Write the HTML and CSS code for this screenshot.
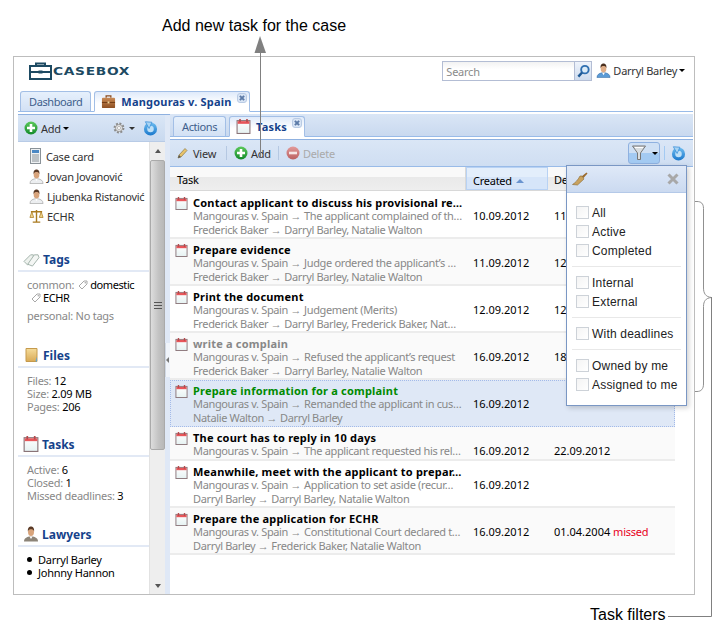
FILE: index.html
```html
<!DOCTYPE html>
<html lang="en">
<head>
<meta charset="utf-8">
<title>Casebox tasks</title>
<link rel="stylesheet" href="styles.css">
</head>
<body>
<svg class="defs" aria-hidden="true">
  <defs>
    <linearGradient id="gBlue" x1="0" y1="0" x2="0" y2="1"><stop offset="0" stop-color="#6fbdf0"/><stop offset="1" stop-color="#1a78cc"/></linearGradient>
    <linearGradient id="gGreen" x1="0" y1="0" x2="0" y2="1"><stop offset="0" stop-color="#5cc95c"/><stop offset="1" stop-color="#138a2a"/></linearGradient>
    <linearGradient id="gRed" x1="0" y1="0" x2="0" y2="1"><stop offset="0" stop-color="#e29a9a"/><stop offset="1" stop-color="#bb6060"/></linearGradient>
    <linearGradient id="gBrown" x1="0" y1="0" x2="0" y2="1"><stop offset="0" stop-color="#c98a55"/><stop offset="1" stop-color="#8d4f22"/></linearGradient>
    <linearGradient id="gFold" x1="0" y1="0" x2="0" y2="1"><stop offset="0" stop-color="#f5dc9a"/><stop offset="1" stop-color="#d9aa55"/></linearGradient>
    <linearGradient id="gCal" x1="0" y1="0" x2="0" y2="1"><stop offset="0" stop-color="#ffffff"/><stop offset="1" stop-color="#e6f2f2"/></linearGradient>
    <symbol id="cal" viewBox="0 0 14 14">
      <rect x="1" y="1.500" width="12" height="12" fill="url(#gCal)" stroke="#8a7478"/>
      <rect x="1.500" y="2" width="11" height="2.500" fill="#e8565a"/>
      <rect x="3" y="0" width="1.500" height="3" fill="#b5494c"/><rect x="9.500" y="0" width="1.500" height="3" fill="#b5494c"/>
    </symbol>
    <symbol id="plus" viewBox="0 0 14 14">
      <circle cx="7" cy="7" r="6.500" fill="url(#gGreen)"/>
      <path d="M5.700 3h2.600v2.700H11v2.600H8.300V11H5.700V8.300H3V5.700h2.700z" fill="#fff"/>
    </symbol>
    <symbol id="minus" viewBox="0 0 14 14">
      <circle cx="7" cy="7" r="6.500" fill="url(#gRed)"/><rect x="3" y="5.700" width="8" height="2.600" fill="#f6e6e6"/>
    </symbol>
    <symbol id="refresh" viewBox="0 0 16 16">
      <circle cx="8" cy="8.500" r="7" fill="url(#gBlue)"/>
      <circle cx="8" cy="8.500" r="3.500" fill="#bfe0f7"/>
      <path d="M2.500 .8 L9.500 1.300 L6.500 8z" fill="#a8d4f4" stroke="#3a8fd8" stroke-width=".8"/>
    </symbol>
    <symbol id="person" viewBox="0 0 16 16">
      <path d="M1 15.500c0-3.500 3-4.500 5-5h4c2 .5 5 1.500 5 5z" fill="#eceef0" stroke="#a0a0a0" stroke-width=".7"/>
      <path d="M6.500 10.500 8 13l1.500-2.500z" fill="#fff"/>
      <ellipse cx="8" cy="6" rx="3" ry="4" fill="#d8a47c"/>
      <path d="M4.900 5.500C4.500 1.500 6.500 .5 8 .5s3.500 1 3.100 5C10.500 3.700 9.500 3.300 8 3.300s-2.500.4-3.100 2.200z" fill="#5a3a26"/>
    </symbol>
    <symbol id="personblue" viewBox="0 0 16 16">
      <path d="M1 15.500c0-3.500 3-4.500 5-5h4c2 .5 5 1.500 5 5z" fill="#5b9bd6" stroke="#3a6fa5" stroke-width=".6"/>
      <path d="M6.500 10.500 8 13l1.500-2.500z" fill="#fff"/>
      <ellipse cx="8" cy="6" rx="3" ry="4" fill="#e0ae88"/>
      <path d="M4.900 5.500C4.500 1.500 6.500 .5 8 .5s3.500 1 3.100 5C10.500 3.700 9.500 3.300 8 3.300s-2.500.4-3.100 2.200z" fill="#4a2f1e"/>
    </symbol>
    <symbol id="tag" viewBox="0 0 10 10">
      <path d="M1 6 6 1h3v3L4 9z" fill="#fff" stroke="#a8a8a8"/><circle cx="7.300" cy="2.700" r=".8" fill="#a8a8a8"/>
    </symbol>
  </defs>
</svg>

<div class="page">
  <div class="caption-top">Add new task for the case</div>

  <div class="frame">
    <header class="top">
      <div class="logo">
        <svg class="logo-mark" viewBox="0 0 23 18" width="23" height="18"><path d="M7 4V1.500h9V4M1 4h21v13H1zM1 10h21" fill="none" stroke="#1d4a62" stroke-width="2"/><rect x="9.500" y="8.500" width="4" height="3" fill="#1d4a62"/></svg>
        <span class="logo-text">CASEBOX</span>
      </div>
      <div class="top-right">
        <div class="search">
          <span class="search-input">Search</span>
          <span class="search-btn"><svg viewBox="0 0 16 16" width="15" height="15"><circle cx="9.500" cy="6" r="4" fill="#dcecf8" stroke="#2f6fb0" stroke-width="2"/><path d="M6.500 9 2.500 13.500" stroke="#1f5a96" stroke-width="2.600"/></svg></span>
        </div>
        <svg class="user-icon" width="15" height="15"><use href="#personblue"/></svg>
        <span class="user-name">Darryl Barley</span><span class="caret"></span>
      </div>
    </header>

    <nav class="tabs main-tabs">
      <div class="tab">Dashboard</div>
      <div class="tab active">
        <svg viewBox="0 0 16 16" width="15" height="15"><path d="M5.500 4V2h5v2" fill="none" stroke="#8d4f22" stroke-width="1.400"/><rect x="1" y="4" width="14" height="11" rx="1" fill="url(#gBrown)"/><rect x="1" y="8.500" width="14" height="1" fill="#6e3a14"/><rect x="7" y="8" width="2" height="2" fill="#f0d9a0"/></svg>
        <span>Mangouras v. Spain</span><span class="tab-close"></span>
      </div>
    </nav>
    <div class="tabs-gap"></div>

    <div class="workspace">
      <aside class="side">
        <div class="side-bar">
          <svg width="14" height="14"><use href="#plus"/></svg>
          <span class="btn-label">Add</span><span class="caret"></span>
          <span class="spacer"></span>
          <svg viewBox="0 0 16 16" width="14" height="14"><circle cx="8" cy="8" r="5" fill="#e8e8e8" stroke="#8a8a8a" stroke-width="2.400" stroke-dasharray="2.200 1.700"/><circle cx="8" cy="8" r="4" fill="none" stroke="#999"/><circle cx="8" cy="8" r="1.800" fill="#fff" stroke="#999" stroke-width=".7"/></svg>
          <span class="caret gear-caret"></span>
          <svg class="side-refresh" width="15" height="15"><use href="#refresh"/></svg>
        </div>
        <div class="side-body">
          <div class="side-content">
            <ul class="people">
              <li><svg viewBox="0 0 14 16" width="14" height="16"><rect x="1.500" y=".5" width="10" height="15" fill="#eef1f3" stroke="#8a9298"/><rect x="3" y="2" width="7" height="3" fill="#4b88c4"/><path d="M3 7h7M3 9h7M3 11h7M3 13h7" stroke="#8a9298"/></svg>Case card</li>
              <li><svg width="15" height="15"><use href="#person"/></svg>Jovan Jovanović</li>
              <li><svg width="15" height="15"><use href="#person"/></svg>Ljubenka Ristanović</li>
              <li><svg viewBox="0 0 16 16" width="15" height="15"><path d="M8 1v13M4 14h8M2 3h12" stroke="#a97a1f" stroke-width="1.500" fill="none"/><path d="M3 3 1 9h4zM13 3l-2 6h4z" fill="#f2d88f" stroke="#a97a1f" stroke-width=".8"/></svg>ECHR</li>
            </ul>

            <section class="sec sec-tags">
              <h3><svg viewBox="0 0 18 16" width="17" height="15"><path d="M1 10 8 3l3 0 0 4-6 7z" fill="#eef2ee" stroke="#9fb0a8"/><path d="M5 13 12 3h4l1 3-7 9z" fill="#f4f6f4" stroke="#9fb0a8"/></svg>Tags</h3>
              <p class="tagline"><span class="muted">common:</span> <svg class="tag-ic" width="10" height="10"><use href="#tag"/></svg><b>domestic</b></p>
              <p class="tagline indent"><svg class="tag-ic" width="10" height="10"><use href="#tag"/></svg><b>ECHR</b></p>
              <p class="muted personal">personal: No tags</p>
            </section>

            <section class="sec sec-files">
              <h3><svg class="files-ic" viewBox="0 0 14 16" width="14" height="16"><path d="M1 1.500h11v13H1z" fill="url(#gFold)" stroke="#c59a4c"/><path d="M12 9.500v5h-1.500z" fill="#5aa6dc"/></svg>Files</h3>
              <p><span class="muted">Files:</span> <b>12</b></p>
              <p><span class="muted">Size:</span> <b>2.09 MB</b></p>
              <p><span class="muted">Pages:</span> <b>206</b></p>
            </section>

            <section class="sec sec-tasks">
              <h3><svg width="16" height="16"><use href="#cal"/></svg>Tasks</h3>
              <p><span class="muted">Active:</span> <b>6</b></p>
              <p><span class="muted">Closed:</span> <b>1</b></p>
              <p><span class="muted">Missed deadlines:</span> <b>3</b></p>
            </section>

            <section class="sec">
              <h3><svg viewBox="0 0 16 16" width="16" height="16"><path d="M1 15.500c0-3.500 3-4.500 5-5h4c2 .5 5 1.500 5 5z" fill="#8c8478"/><path d="M6.500 10.500 8 13l1.500-2.500z" fill="#fff"/><ellipse cx="8" cy="6" rx="3" ry="4" fill="#d8a47c"/><path d="M4.900 5.500C4.500 1.500 6.500 .5 8 .5s3.500 1 3.100 5C10.500 3.700 9.500 3.300 8 3.300s-2.500.4-3.100 2.200z" fill="#5a3a26"/></svg>Lawyers</h3>
              <ul class="bullets"><li>Darryl Barley</li><li>Johnny Hannon</li></ul>
            </section>
          </div>
          <div class="scrollbar">
            <span class="arrow-up"></span>
            <div class="thumb"><span class="grip"></span></div>
            <span class="arrow-down"></span>
          </div>
        </div>
      </aside>

      <div class="splitter"><span class="collapse"></span></div>

      <main class="main">
        <nav class="tabs sub-tabs">
          <div class="tab">Actions</div>
          <div class="tab active">
            <svg width="15" height="15"><use href="#cal"/></svg>
            <span>Tasks</span><span class="tab-close"></span>
          </div>
        </nav>
        <div class="tabs-gap thin"></div>

        <div class="toolbar">
          <span class="tool tool-view"><svg viewBox="0 0 12 12" width="12" height="12"><path d="M1 11l1-3 6-6.500 2 2L4 10z" fill="#e8c36a" stroke="#8a7a4a" stroke-width=".7"/><path d="M1 11l1-3 2 2z" fill="#555"/></svg><span>View</span></span>
          <span class="sep"></span>
          <span class="tool"><svg width="14" height="14"><use href="#plus"/></svg><span>Add</span></span>
          <span class="sep"></span>
          <span class="tool disabled"><svg width="14" height="14"><use href="#minus"/></svg><span>Delete</span></span>
          <span class="spacer"></span>
          <span class="filter-btn">
            <svg viewBox="0 0 14 16" width="14" height="16"><path d="M.5 1h13L8.500 8v6.500h-3V8z" fill="#d8dde0" stroke="#777"/><path d="M3 2.500h8" stroke="#fff"/></svg>
            <span class="caret"></span>
          </span>
          <span class="sep blue"></span>
          <svg class="tool-refresh" width="15" height="15"><use href="#refresh"/></svg>
        </div>

        <div class="grid-head">
          <div class="hd hd-task">Task</div>
          <div class="hd hd-created">Created <span class="sort"></span></div>
          <div class="hd hd-deadline">Deadline</div>
        </div>

        <div class="rows">
          <article class="row">
            <svg class="row-ic" width="13" height="13"><use href="#cal"/></svg>
            <div class="cell-main"><div class="title">Contact applicant to discuss his provisional re…</div><div class="sub">Mangouras v. Spain <span class="arr">→</span> The applicant complained of th…</div><div class="sub">Frederick Baker <span class="arr">→</span> Darryl Barley, Natalie Walton</div></div>
            <div class="date">10.09.2012</div><div class="date">11.09.2012</div>
          </article>
          <article class="row alt">
            <svg class="row-ic" width="13" height="13"><use href="#cal"/></svg>
            <div class="cell-main"><div class="title">Prepare evidence</div><div class="sub">Mangouras v. Spain <span class="arr">→</span> Judge ordered the applicant’s …</div><div class="sub">Frederick Baker <span class="arr">→</span> Darryl Barley, Natalie Walton</div></div>
            <div class="date">11.09.2012</div><div class="date">12.09.2012</div>
          </article>
          <article class="row">
            <svg class="row-ic" width="13" height="13"><use href="#cal"/></svg>
            <div class="cell-main"><div class="title">Print the document</div><div class="sub">Mangouras v. Spain <span class="arr">→</span> Judgement (Merits)</div><div class="sub">Frederick Baker <span class="arr">→</span> Darryl Barley, Frederick Baker, Nat…</div></div>
            <div class="date">12.09.2012</div><div class="date">12.09.2012</div>
          </article>
          <article class="row alt">
            <svg class="row-ic" width="13" height="13"><use href="#cal"/></svg>
            <div class="cell-main"><div class="title done">write a complain</div><div class="sub">Mangouras v. Spain <span class="arr">→</span> Refused the applicant’s request</div><div class="sub">Frederick Baker <span class="arr">→</span> Darryl Barley, Natalie Walton</div></div>
            <div class="date">16.09.2012</div><div class="date">18.09.2012</div>
          </article>
          <article class="row selected">
            <svg class="row-ic" width="13" height="13"><use href="#cal"/></svg>
            <div class="cell-main"><div class="title green">Prepare information for a complaint</div><div class="sub">Mangouras v. Spain <span class="arr">→</span> Remanded the applicant in cus…</div><div class="sub">Natalie Walton <span class="arr">→</span> Darryl Barley</div></div>
            <div class="date">16.09.2012</div><div class="date"></div>
          </article>
          <article class="row alt short">
            <svg class="row-ic" width="13" height="13"><use href="#cal"/></svg>
            <div class="cell-main"><div class="title">The court has to reply in 10 days</div><div class="sub">Mangouras v. Spain <span class="arr">→</span> The applicant requested his rel…</div></div>
            <div class="date">16.09.2012</div><div class="date">22.09.2012</div>
          </article>
          <article class="row">
            <svg class="row-ic" width="13" height="13"><use href="#cal"/></svg>
            <div class="cell-main"><div class="title">Meanwhile, meet with the applicant to prepar…</div><div class="sub">Mangouras v. Spain <span class="arr">→</span> Application to set aside (recur…</div><div class="sub">Darryl Barley <span class="arr">→</span> Darryl Barley, Natalie Walton</div></div>
            <div class="date">16.09.2012</div><div class="date"></div>
          </article>
          <article class="row alt">
            <svg class="row-ic" width="13" height="13"><use href="#cal"/></svg>
            <div class="cell-main"><div class="title">Prepare the application for ECHR</div><div class="sub">Mangouras v. Spain <span class="arr">→</span> Constitutional Court declared t…</div><div class="sub">Darryl Barley <span class="arr">→</span> Frederick Baker, Natalie Walton</div></div>
            <div class="date">16.09.2012</div><div class="date">01.04.2004 <span class="missed">missed</span></div>
          </article>
        </div>
      </main>
    </div>

    <div class="popup">
      <div class="popup-head">
        <svg viewBox="0 0 16 14" width="16" height="14"><path d="M9.500 4.500 14.500.5l1 1-4 4.500z" fill="#9a6a2e"/><path d="M10 4 12 7 5.500 13 .5 12.500C3 11 6 8 8 4z" fill="#c9a25e" stroke="#8a6a30" stroke-width=".6"/></svg>
        <svg viewBox="0 0 12 12" width="12" height="12"><path d="M1.500 1.500l9 9M10.500 1.500l-9 9" stroke="#a8a8a8" stroke-width="3"/></svg>
      </div>
      <div class="popup-body">
        <div class="group">
          <label class="opt"><span class="box"></span>All</label>
          <label class="opt"><span class="box"></span>Active</label>
          <label class="opt"><span class="box"></span>Completed</label>
        </div>
        <div class="group">
          <label class="opt"><span class="box"></span>Internal</label>
          <label class="opt"><span class="box"></span>External</label>
        </div>
        <div class="group">
          <label class="opt"><span class="box"></span>With deadlines</label>
        </div>
        <div class="group">
          <label class="opt"><span class="box"></span>Owned by me</label>
          <label class="opt"><span class="box"></span>Assigned to me</label>
        </div>
      </div>
    </div>
  </div>

  <svg class="notes" width="728" height="636" aria-hidden="true">
    <path d="M260.500 52V157" stroke="#808080" fill="none"/>
    <path d="M260 36 254.500 53H266z" fill="#808080"/>
    <path d="M695 201.500h2c4 0 6.500 2 6.500 7V288c0 5 2 9 8 9.500-6 .5-8 4-8 9V384c0 5-2.500 7.500-6.500 7.500h-2" fill="none" stroke="#909090"/>
    <path d="M711.500 297V616.500H668" fill="none" stroke="#808080"/>
  </svg>
  <div class="caption-bottom">Task filters</div>
</div>
</body>
</html>
```
FILE: styles.css
```css
* { box-sizing: border-box; }
html, body { margin: 0; padding: 0; background: #fff; }
body { font: 11px/13px "Noto Sans", "Liberation Sans", sans-serif; letter-spacing: -.25px; color: #000; }
ul { list-style: none; margin: 0; padding: 0; }
p, h3 { margin: 0; }
svg { flex: none; display: block; }
.defs { position: absolute; width: 0; height: 0; }
.page { position: relative; width: 728px; height: 636px; overflow: hidden; }

.caption-top { height: 56px; padding: 16px 0 0 162px; font: 16px/19px "Liberation Sans", sans-serif; letter-spacing: 0; }
.caption-bottom { position: absolute; left: 590px; top: 605px; font: 16px/19px "Liberation Sans", sans-serif; letter-spacing: 0; }
.notes { position: absolute; left: 0; top: 0; pointer-events: none; }

.frame { position: relative; width: 682px; height: 539px; margin-left: 13px; border: 1px solid #bdbdbd; padding: 0 1px 0 4px; display: flex; flex-direction: column; }

.top { height: 33px; display: flex; justify-content: space-between; padding: 4px 8px 0 11px; flex: none; }
.logo { display: flex; align-items: center; height: 20px; gap: 1px; }
.logo-text { font: bold 11px/14px "DejaVu Sans", sans-serif; letter-spacing: .55px; color: #1d4a62; padding-top: 2px; transform: scaleX(1.25); transform-origin: left center; }
.top-right { display: flex; align-items: flex-start; }
.search { width: 150px; height: 20px; border: 1px solid #b3bdd4; display: flex; background: linear-gradient(#f2f2f2, #fff 40%); }
.search-input { flex: 1; padding: 3px 0 0 3px; color: #8a8a8a; }
.search-btn { width: 17px; background: linear-gradient(#eef3fb, #cfdcee); border-left: 1px solid #b3bdd4; display: flex; align-items: center; justify-content: center; }
.user-icon { margin: 2px 2px 0 4px; }
.user-name { padding-top: 3px; color: #333; }
.caret { display: inline-block; flex: none; width: 0; height: 0; border: 3px solid transparent; border-top: 3px solid #000; border-bottom: 0; margin-left: 2px; }
.top-right .caret { margin-top: 8px; }

.tabs { display: flex; align-items: flex-end; gap: 3px; flex: none; }
.main-tabs { height: 22px; padding-left: 2px; border-bottom: 1px solid #99bbe8; }
.tab { height: 21px; padding: 0 8px; margin-bottom: -1px; border: 1px solid #a3bfe6; border-bottom: 1px solid #99bbe8; border-radius: 3px 3px 0 0; background: linear-gradient(#e6f0fc, #d3e1f4); color: #3f5f8c; letter-spacing: -.4px; display: flex; align-items: center; gap: 5px; }
.tab.active { background: linear-gradient(#dfeafa, #fff 60%); border-bottom-color: #fff; color: #15428b; font-weight: 700; letter-spacing: .2px; padding: 0 2px 0 6px; position: relative; }
.tab-close { width: 10px; height: 10px; margin: -7px 0 0 0; border-radius: 3px; border: 1px solid #b9cbe4; background: #d9e5f5; position: relative; }
.tab-close::before { content: ""; position: absolute; left: 1px; top: 3px; width: 6px; height: 2px; background: #5d7ba8; transform: rotate(45deg); }
.tab-close::after { content: ""; position: absolute; left: 1px; top: 3px; width: 6px; height: 2px; background: #5d7ba8; transform: rotate(-45deg); }
.tabs-gap { height: 3px; flex: none; border-bottom: 1px solid #8fb1e0; background: #fff; }

.workspace { flex: 1; min-height: 0; display: flex; }
.side { width: 147px; flex: none; display: flex; flex-direction: column; }
.side-bar { height: 27px; flex: none; display: flex; align-items: center; padding: 0 7px 0 6px; background: linear-gradient(#dae6f6, #c9d9ef); border-bottom: 1px solid #b8cbe6; }
.btn-label { margin-left: 3px; color: #333; }
.spacer { flex: 1; }
.gear-caret { margin: 0 8px 0 3px; border-top-color: #333; }
.side-body { flex: 1; min-height: 0; display: flex; }
.side-content { width: 131px; flex: none; padding-top: 4px; color: #333; }
.people li { height: 20px; display: flex; align-items: center; padding-left: 11px; gap: 3px; white-space: nowrap; }
.sec { margin-top: 18px; }
.sec-tags { margin-top: 19px; }
.sec-files { margin-top: 19px; }
.sec-tasks { margin-top: 17px; }
.sec h3 { height: 27px; padding: 3px 0 0 5px; border-bottom: 2px solid #e2e9f5; display: flex; align-items: center; gap: 3px; color: #15428b; font-size: 12px; font-weight: 700; letter-spacing: 0; margin-bottom: 6px; }
.files-ic { margin: 0 1px 0 2px; }
.sec p { padding-left: 9px; }
.muted { color: #888; }
.sec b { font-weight: 400; color: #000; }
.tagline { display: flex; align-items: center; gap: 2px; }
.tagline b { letter-spacing: -.4px; }
.tagline .muted { margin-right: 2px; }
.tagline.indent { padding-left: 13px; }
.personal { margin-top: 5px; }
.bullets { padding-left: 9px; }
.bullets li { display: flex; align-items: center; gap: 6px; color: #000; }
.bullets li::before { content: ""; width: 5px; height: 5px; border-radius: 50%; background: #000; }

.scrollbar { width: 16px; flex: none; background: #eeeeee; border-left: 1px solid #e2e2e2; display: flex; flex-direction: column; align-items: center; }
.arrow-up { width: 0; height: 0; border: 3px solid transparent; border-bottom: 4px solid #555; border-top: 0; margin: 7px 0; }
.thumb { width: 15px; height: 290px; border: 1px solid #aaa; border-radius: 2px; background: linear-gradient(90deg, #ddd, #c2c2c2 60%, #b8b8b8); display: flex; align-items: center; justify-content: center; }
.grip { width: 8px; height: 7px; border-top: 1px solid #555; border-bottom: 1px solid #555; position: relative; }
.grip::after { content: ""; position: absolute; left: 0; right: 0; top: 2px; height: 1px; background: #555; }
.arrow-down { width: 0; height: 0; border: 3px solid transparent; border-top: 4px solid #555; border-bottom: 0; margin-top: auto; margin-bottom: 6px; }

.splitter { width: 5px; flex: none; background: #dfe8f6; position: relative; }
.collapse { position: absolute; left: 0; top: 228px; width: 5px; height: 34px; background: #f0f4fa; border-left: 1px solid #d0d8e4; }
.collapse::after { content: ""; position: absolute; left: 0; top: 14px; border: 3px solid transparent; border-right: 3px solid #777; border-left: 0; }

.main { flex: 1; min-width: 0; display: flex; flex-direction: column; margin-top: -1px; }
.sub-tabs { height: 23px; padding: 2px 0 0 3px; background: linear-gradient(#dae6f6, #c9d9ef); border-bottom: 1px solid #99bbe8; }
.toolbar { height: 27px; flex: none; display: flex; align-items: center; padding: 0 7px; background: linear-gradient(#dae6f6, #cfdef2); border-bottom: 1px solid #99bbe8; color: #333; }
.tool { display: flex; align-items: center; gap: 3px; }
.tool-view { margin-right: 3px; }
.tool-view svg { margin-right: 1px; }
.tool.disabled { color: #aaa; }
.sep { width: 1px; height: 14px; background: #b5c8e2; margin: 0 7px; }
.filter-btn { width: 32px; height: 22px; border: 1px solid #8fb1e0; border-radius: 3px; background: linear-gradient(#cfe0f4 50%, #a3caf2 50%); display: flex; align-items: center; gap: 2px; padding-left: 3px; }
.filter-btn .caret { margin-left: 4px; }
.sep.blue { margin: 0 6px 0 4px; background: #a3caf2; }

.grid-head { height: 24px; flex: none; width: 505px; display: flex; background: linear-gradient(#f9f9f9, #f9f9f9 45%, #e9e9e9 45%, #eee); border-bottom: 1px solid #d8d8d8; }
.hd { padding-top: 6px; }
.hd-task { width: 296px; padding-left: 7px; border-right: 1px solid #d8d8d8; }
.hd-created { width: 82px; padding-left: 6px; border: 1px solid #b8d2f4; background: linear-gradient(#e3eefb, #e3eefb 45%, #d6e5f9 45%); display: flex; gap: 4px; }
.sort { width: 0; height: 0; border: 4px solid transparent; border-bottom: 4px solid #6a94cf; border-top: 0; margin-top: 5px; }
.hd-deadline { padding-left: 6px; }

.rows { width: 505px; margin-top: 1px; }
.row { display: flex; align-items: stretch; height: 47px; border-bottom: 2px solid #ececec; background: #fff; padding: 4px 0 0 5px; }
.row.alt { background: #fafafa; }
.row.short { height: 34px; }
.row.selected { background: #dfe8f6; border: 1px dotted #a3bae9; padding: 3px 0 0 4px; }
.row-ic { margin-top: 1px; }
.cell-main { width: 285px; flex: none; padding-left: 5px; }
.title { font-weight: 700; color: #000; white-space: nowrap; letter-spacing: .2px; }
.title.done { color: #888; }
.title.green { color: #008a00; }
.sub { color: #888; white-space: nowrap; letter-spacing: -.35px; }
.arr { font-family: "Liberation Sans", sans-serif; letter-spacing: 0; }
.date { width: 81px; flex: none; padding-top: 13px; white-space: nowrap; letter-spacing: 0; }
.missed { color: #e8001c; letter-spacing: -.25px; }

.popup { position: absolute; left: 552px; top: 108px; width: 121px; height: 241px; border: 1px solid #7a97c4; background: #fff; box-shadow: 2px 2px 5px rgba(0,0,0,.18); font: 12px/14px "Liberation Sans", sans-serif; letter-spacing: .2px; color: #222; }
.popup-head { height: 27px; display: flex; align-items: center; justify-content: space-between; padding: 0 7px 0 5px; background: linear-gradient(#dfe9f8, #cbdaf0); border-bottom: 1px solid #b4c9e8; }
.popup-body { padding: 10px 5px 0; }
.group { padding-bottom: 6px; border-bottom: 1px solid #e8e8e8; margin-bottom: 6px; }
.group:last-child { border-bottom: 0; }
.opt { display: flex; align-items: center; height: 19px; gap: 3px; padding-left: 4px; white-space: nowrap; }
.box { width: 13px; height: 13px; flex: none; border: 1px solid #cdd2d8; background: linear-gradient(135deg, #f4f4f4, #fff); }
```
